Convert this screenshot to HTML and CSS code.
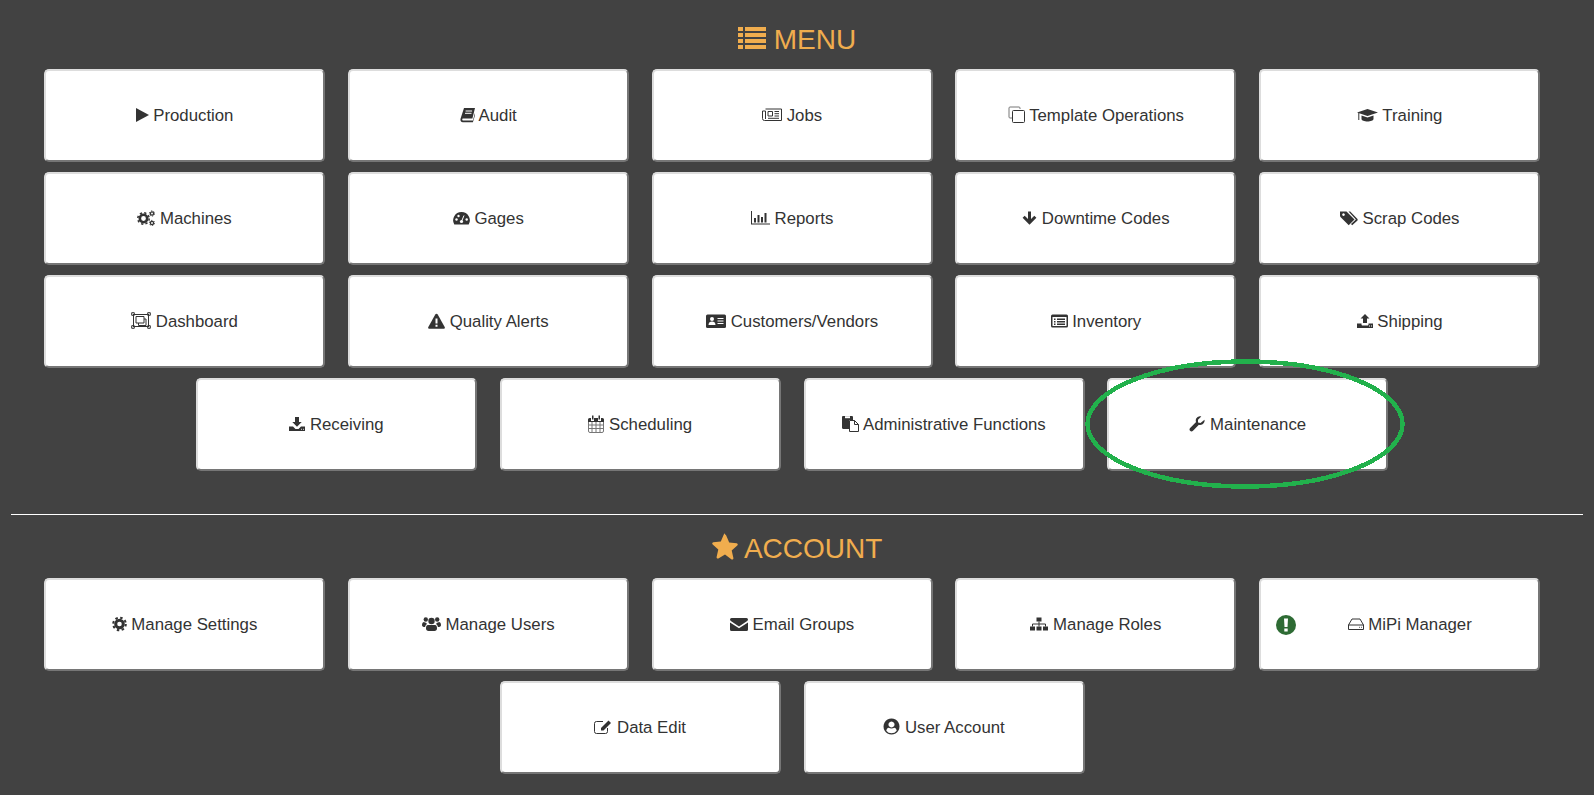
FILE: index.html
```html
<!DOCTYPE html>
<html lang="en">
<head>
    <meta charset="UTF-8">
    <meta name="viewport" content="width=device-width, initial-scale=1.0">
    <title>Menu</title>
    <link rel="stylesheet" href="styles.css">
</head>
<body>
    <h2 class="section-title">
        <svg class="title-icon" width="28" height="28" viewBox="0 0 28 28"><path d="M0 3h5v4H0zM7 3h21v4H7zM0 9h5v4H0zM7 9h21v4H7zM0 15h5v4H0zM7 15h21v4H7zM0 21h5v4H0zM7 21h21v4H7z"/></svg>
        MENU
    </h2>
    <div class="tiles">
        <button class="tile"><svg class="ico" width="13" height="16" viewBox="0 0 13 16"><path d="M0 1l13 7-13 7z"/></svg> Production</button>
        <button class="tile"><svg class="ico" width="15" height="16" viewBox="0 0 15 16"><path d="M4 1h11l-2.600 10.600H3.200c-1.300 0-1.300 2 .1 2h9.600L15 6l.2 1.500-2.300 7.700H2.800C.8 15.200.1 13.500.6 11.500z"/><path class="cut" d="M5.600 4h6.500M5 6.300h6.500"/></svg> Audit</button>
        <button class="tile"><svg class="ico" width="20" height="16" viewBox="0 0 20 16"><path class="line" d="M3.500 2h16v11.500h-17a2 2 0 0 1-2-2V4h3v8M6 4.500h4.500V9H6zM12.500 4.500H17M12.500 6.700H17M12.500 9H17M6 11.300h11"/></svg> Jobs</button>
        <button class="tile"><svg class="ico" width="17" height="17" viewBox="0 0 17 17"><path class="line faint" d="M12 3V2a1 1 0 0 0-1-1H2a1 1 0 0 0-1 1v9a1 1 0 0 0 1 1h2"/><rect class="line" x="4.500" y="4.500" width="12" height="12" rx="1"/></svg> Template Operations</button>
        <button class="tile"><svg class="ico" width="21" height="16" viewBox="0 0 21 16"><path d="M10.500 2L21 5.500 10.500 9 0 5.500zM4.500 8.500l6 2 6-2V12c0 1.500-3 2.500-6 2.500s-6-1-6-2.500z"/><path class="line" d="M1.800 6v7"/></svg> Training</button>

        <button class="tile"><svg class="ico" width="18" height="16" viewBox="0 0 18 16"><circle class="ring" cx="6.500" cy="8.500" r="3.700" stroke-width="2.600"/><circle class="ring" cx="6.500" cy="8.500" r="5.700" stroke-width="1.500" stroke-dasharray="2.240 2.240"/><circle class="ring" cx="15" cy="3.500" r="1.600" stroke-width="1.300"/><circle class="ring" cx="15" cy="3.500" r="2.600" stroke-width=".9" stroke-dasharray="1.360 1.360"/><circle class="ring" cx="15" cy="13" r="1.600" stroke-width="1.300"/><circle class="ring" cx="15" cy="13" r="2.600" stroke-width=".9" stroke-dasharray="1.360 1.360"/></svg> Machines</button>
        <button class="tile"><svg class="ico" width="17" height="16" viewBox="0 0 17 16"><path d="M8.500 2a8.300 8.300 0 0 0-7.200 12.500h14.400A8.300 8.300 0 0 0 8.500 2z"/><path class="cut" d="M8.500 11.500L11 5.500"/><circle class="dot" cx="3.500" cy="9.500" r="1.200"/><circle class="dot" cx="5.500" cy="6" r="1.200"/><circle class="dot" cx="13.700" cy="9.500" r="1.200"/><circle class="dot" cx="8.500" cy="11.500" r="1.600"/></svg> Gages</button>
        <button class="tile"><svg class="ico" width="19" height="16" viewBox="0 0 19 16"><path d="M0 1h1v12.500h18v1H0zM3 8h2v4.500H3zM6.500 5h2v7.500h-2zM10 7h2v5.500h-2zM13.500 3h2v9.500h-2z"/></svg> Reports</button>
        <button class="tile"><svg class="ico" width="15" height="16" viewBox="0 0 15 16"><path d="M6 1.500h3V9l3.300-3.300 2.100 2.100-6.900 6.900L.6 7.800l2.100-2.100L6 9z"/></svg> Downtime Codes</button>
        <button class="tile"><svg class="ico" width="18" height="16" viewBox="0 0 18 16"><path fill-rule="evenodd" d="M0 1.500h6.500l8 8-5.800 5.800-8-8a3 3 0 0 1-.7-2zM3.500 3.300a1.300 1.300 0 1 0 .01 0z"/><path d="M8.500 1.500h1.700l7.300 7.500a1.500 1.500 0 0 1 0 1.500l-5.300 4.800-1.200-1.200 4.900-4.500z"/></svg> Scrap Codes</button>

        <button class="tile"><svg class="ico" width="20" height="17" viewBox="0 0 20 17"><path class="line" d="M2 2.500h16M2 14.500h16M2.500 3v11M17.500 3v11M5 4.500h8v6.500H5zM7.500 11v2.500H15V7h-2"/><path class="line" d="M.7.700h2.600v2.600H.7zM16.700.700h2.600v2.600h-2.600zM.7 13.700h2.600v2.600H.7zM16.700 13.700h2.600v2.600h-2.600z"/></svg> Dashboard</button>
        <button class="tile"><svg class="ico" width="17" height="16" viewBox="0 0 17 16"><path d="M8.500 .8c.5 0 .9.300 1.200.7l7 12.500c.5 1-.2 1.800-1.200 1.800H1.500c-1 0-1.700-.8-1.200-1.800l7-12.500c.3-.4.700-.7 1.200-.7z"/><path class="cut wide" d="M8.500 5.500v5M8.500 11.700v2"/></svg> Quality Alerts</button>
        <button class="tile"><svg class="ico" width="20" height="16" viewBox="0 0 20 16"><rect y="1.500" width="20" height="13.500" rx="1.500"/><circle class="dot" cx="6" cy="6" r="2"/><path class="dot" d="M2.500 12c0-2.500 1.500-3.500 3.500-3.500s3.500 1 3.500 3.500z"/><path class="cut" d="M11.500 5.500h6M11.500 8h6M11.500 10.500h6"/></svg> Customers/Vendors</button>
        <button class="tile"><svg class="ico" width="17" height="16" viewBox="0 0 17 16"><path fill-rule="evenodd" d="M1.500 1.500h14A1.500 1.500 0 0 1 17 3v10a1.500 1.500 0 0 1-1.500 1.500h-14A1.500 1.500 0 0 1 0 13V3a1.500 1.500 0 0 1 1.500-1.500zM1.500 4v8.800a.3.300 0 0 0 .3.300h13.400a.3.300 0 0 0 .3-.3V4z"/><path d="M3 5.500h1.500V7H3zM6 5.500h8V7H6zM3 8h1.500v1.500H3zM6 8h8v1.500H6zM3 10.500h1.500V12H3zM6 10.500h8V12H6z"/></svg> Inventory</button>
        <button class="tile"><svg class="ico" width="16" height="16" viewBox="0 0 16 16"><path d="M8 1l4.500 4.500H10V10H6V5.500H3.500z"/><path d="M0 10.500h4.500v1c0 .5.500 1 1 1h5c.5 0 1-.5 1-1v-1H16V15H0zM12 12.500v1h1v-1zM14 12.500v1h1v-1z"/></svg> Shipping</button>

        <button class="tile"><svg class="ico" width="16" height="16" viewBox="0 0 16 16"><path d="M6 1h4v5h2.700L8 10.800 3.300 6H6z"/><path d="M0 10.500h4l2.500 2.500h3l2.500-2.500h4V15H0z"/><path class="cut thin" d="M12 13.300h1M14 13.300h1"/></svg> Receiving</button>
        <button class="tile"><svg class="ico ico-tall" width="16" height="18" viewBox="0 0 16 18"><path d="M1.500 3H3v3h3V3h4v3h3V3h1.500A1.500 1.500 0 0 1 16 4.500V7H0V4.500A1.500 1.500 0 0 1 1.500 3zM4 .5h1.500v4H4zM10.500 .5H12v4h-1.500z"/><path class="line faint" d="M.5 7v9a1.500 1.500 0 0 0 1.500 1.500h12a1.500 1.500 0 0 0 1.500-1.500V7M4 7v10M8 7v10M12 7v10M.5 10h15M.5 13.500h15"/></svg> Scheduling</button>
        <button class="tile"><svg class="ico" width="17" height="17" viewBox="0 0 17 17"><path d="M1.200 1h8.600c.7 0 1.200.5 1.200 1.200V5H7v9H1.200C.5 14 0 13.500 0 12.800V2.200C0 1.500.5 1 1.200 1z"/><path class="cut wide" d="M3 2.200h5"/><path class="line" d="M7.500 5.500h5l4 4v7h-9zM12.500 5.500v4h4"/></svg> Administrative Functions</button>
        <button class="tile"><svg class="ico" width="16" height="16" viewBox="0 0 16 16"><path d="M15.500 3.800c.5 2.700-1.500 5.200-4.300 5.200-.5 0-.9-.1-1.300-.2L4 14.700c-.9.900-2.100.9-2.900 0-.8-.8-.8-2 0-2.800l6-6c-.9-2.300.2-4.900 3-5.500.8-.1 1.500 0 2.200.2L9 3.800v2.700l2.500.6z"/></svg> Maintenance</button>
    </div>

    <hr class="divider">

    <h2 class="section-title">
        <svg class="title-icon" width="26" height="28" viewBox="0 0 26 28"><path d="M13 1.500c.6 0 1 .4 1.200 1l3 7 7.400.7c1.100.1 1.600 1.400.7 2.200l-5.600 5 1.700 7.700c.2 1.100-.9 1.900-1.800 1.300L13 21.500l-6.600 3.900c-.9.600-2-.2-1.800-1.300l1.700-7.700-5.600-5c-.9-.8-.4-2.100.7-2.200l7.400-.7 3-7c.2-.6.600-1 1.200-1z"/></svg>
        ACCOUNT
    </h2>
    <div class="tiles">
        <button class="tile"><svg class="ico" width="15" height="16" viewBox="0 0 15 16"><circle class="ring" cx="7.500" cy="8" r="3.800" stroke-width="3"/><circle class="ring" cx="7.500" cy="8" r="6.300" stroke-width="2" stroke-dasharray="2.470 2.470"/></svg> Manage Settings</button>
        <button class="tile"><svg class="ico" width="19" height="16" viewBox="0 0 19 16"><circle cx="9.500" cy="5" r="3.200"/><circle cx="3.800" cy="3.500" r="2.200"/><circle cx="15.200" cy="3.500" r="2.200"/><path d="M6 9h7c1.500 0 2 1.500 2 3.500 0 1.500-1 2.500-2.500 2.500h-6C5 15 4 14 4 12.500 4 10.500 4.500 9 6 9zM0 9c0-2 1-3 2-3 .5.500 1.200.8 2 .8l1 1.200C4 8.500 3.300 9.500 3.100 11 1 11 0 10.500 0 9zM19 9c0-2-1-3-2-3-.5.500-1.200.8-2 .8L14 8c1 .5 1.700 1.500 1.900 3 2.100 0 3.100-.5 3.100-2z"/></svg> Manage Users</button>
        <button class="tile"><svg class="ico" width="18" height="16" viewBox="0 0 18 16"><path d="M1.500 2h15A1.500 1.500 0 0 1 18 3.500c0 .6-.3 1.100-.8 1.500L9 10.500.8 5C.3 4.600 0 4.100 0 3.500A1.500 1.500 0 0 1 1.500 2zM0 6.500l9 5.800 9-5.800v7A1.500 1.500 0 0 1 16.500 15h-15A1.500 1.500 0 0 1 0 13.500z"/></svg> Email Groups</button>
        <button class="tile"><svg class="ico" width="18" height="16" viewBox="0 0 18 16"><path d="M6.500 1.500h5v4h-5zM0 10.500h5v4H0zM6.500 10.500h5v4h-5zM13 10.500h5v4h-5z"/><path class="line" d="M9 5.500v5M2.500 10.500V8h13v2.500"/></svg> Manage Roles</button>
        <button class="tile tile-alert">
            <svg class="alert-badge" width="20" height="20" viewBox="0 0 20 20"><circle cx="10" cy="10" r="10"/><path class="alert-mark" d="M8 3.500h4l-.5 8.500h-3zM8.300 13.500h3.400V16.500H8.300z"/></svg>
            <svg class="ico" width="16" height="16" viewBox="0 0 16 16"><path class="line" d="M4 3h8l3.500 6v4.500h-15V9zM.5 9h15"/><path class="line" d="M11 11.300h.8M13 11.300h.8"/></svg> MiPi Manager
        </button>
        <button class="tile"><svg class="ico" width="18" height="16" viewBox="0 0 18 16"><path class="line" d="M13.500 9v3.500a2 2 0 0 1-2 2h-9a2 2 0 0 1-2-2v-8a2 2 0 0 1 2-2H9"/><path d="M14.500 1.500l2.500 2.500-7.500 7.500H7V9z"/></svg> Data Edit</button>
        <button class="tile"><svg class="ico" width="17" height="17" viewBox="0 0 17 17"><path fill-rule="evenodd" d="M8.500 .5a8 8 0 1 0 .01 0zM8.500 3.500a3 3 0 1 1-.01 0zM3.300 12.700c.3-1.700 1.300-2.800 2.500-2.900.7.500 1.600.8 2.700.8s2-.3 2.700-.8c1.200.1 2.200 1.200 2.500 2.900a6.500 6.500 0 0 1-10.400 0z"/></svg> User Account</button>
    </div>

    <svg class="circle-mark" width="322" height="132" viewBox="0 0 322 132">
        <ellipse cx="161" cy="66" rx="157.500" ry="62.500"/>
    </svg>
</body>
</html>
```

FILE: styles.css
```css
html, body {
    height: 100%;
}
body {
    margin: 0;
    padding: 24px 53.800px 0 44px;
    box-sizing: border-box;
    position: relative;
    overflow: hidden;
    background: #424242;
    color: #333;
    font-family: "Liberation Sans", Arial, sans-serif;
    font-size: 16px;
}
.section-title {
    margin: 0 -53.800px 14px -44px;
    text-align: center;
    color: #f0ad4e;
    font-size: 28px;
    font-weight: 400;
    line-height: 31px;
}
.title-icon {
    fill: currentColor;
    vertical-align: -3px;
}
.tiles {
    display: flex;
    flex-wrap: wrap;
    justify-content: center;
    gap: 10px 22.800px;
}
.tile {
    width: 281px;
    height: 93px;
    padding: 0;
    position: relative;
    box-sizing: border-box;
    background: #fff;
    color: #333;
    border: 2px solid;
    border-color: #ddd #767676 #767676 #ddd;
    border-radius: 5px;
    font-family: inherit;
    font-size: 16.800px;
}
.tile-alert {
    padding-left: 20px;
}
.alert-badge {
    position: absolute;
    left: 15px;
    top: 35px;
    fill: #2e6b34;
}
.alert-mark {
    fill: #fff;
}
.ico {
    fill: currentColor;
    vertical-align: -2px;
}
.ico-tall {
    vertical-align: -3px;
}
.ico .line {
    fill: none;
    stroke: currentColor;
    stroke-width: 1;
}
.ico .faint {
    stroke: #777;
}
.ico .ring {
    fill: none;
    stroke: currentColor;
}
.ico .cut {
    fill: none;
    stroke: #fff;
    stroke-width: 1;
}
.ico .wide {
    stroke-width: 2;
}
.ico .thin {
    stroke-width: .8;
}
.ico .dot {
    fill: #fff;
}
.divider {
    margin: 43px -42.800px 18px -33px;
    border: 0;
    border-top: 1px solid #fff;
}
.circle-mark {
    position: absolute;
    left: 1084px;
    top: 358px;
    fill: none;
    stroke: #22b14c;
    stroke-width: 4.500;
    shape-rendering: crispEdges;
}
```
